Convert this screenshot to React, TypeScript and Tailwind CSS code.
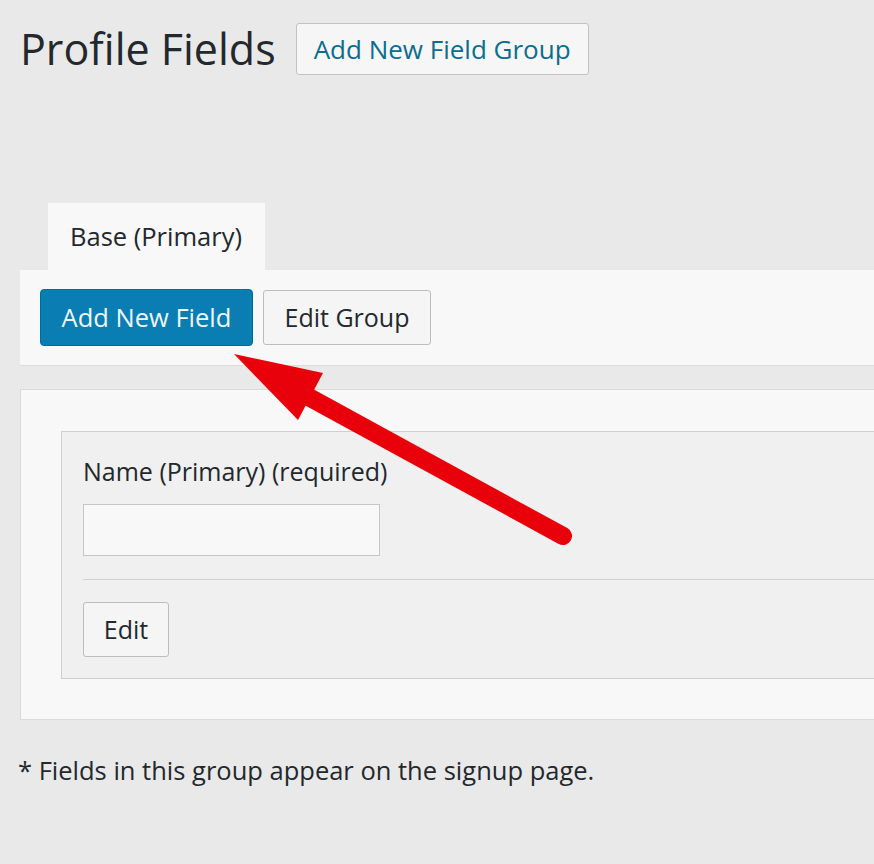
const font = "font-['Open_Sans','Noto_Sans',sans-serif]";

const Arrow = () => (
  <svg className="pointer-events-none absolute left-0 top-0" width="874" height="864" viewBox="0 0 874 864">
    <line x1="305" y1="395" x2="563" y2="536" stroke="#e8000b" strokeWidth="18" strokeLinecap="round" />
    <polygon points="234,354 323,373 298,420" fill="#e8000b" />
  </svg>
);

export default function App() {
  return (
    <div className={`relative min-h-[864px] overflow-hidden bg-[#e9e9e9] pl-5 pt-[23px] text-[#23282d] ${font}`}>
      <div className="flex items-center gap-5">
        <h1 className="text-[43px] leading-[52px]">Profile Fields</h1>
        <button className="h-[52px] rounded-[3px] border border-[#c2c2c2] bg-[#f6f6f6] px-[17px] text-[26px] text-[#0b6d8f]">
          Add New Field Group
        </button>
      </div>

      <div className="ml-7 mt-[128px] flex h-[67px] w-[217px] items-center bg-[#f8f8f8] pl-[22px] text-[25.5px]">
        Base (Primary)
      </div>
      <div className="flex h-24 items-center gap-[10px] border-b border-[#dcdcdc] bg-[#f8f8f8] pl-5">
        <button className="h-[57px] w-[213px] rounded-[4px] border border-[#006c9c] bg-[#0a7db3] text-[25.5px] text-[#eef6fa]">
          Add New Field
        </button>
        <button className="h-[55px] w-[168px] rounded-[3px] border border-[#bdbdbd] bg-[#f5f5f5] text-[25px]">
          Edit Group
        </button>
      </div>

      <div className="mt-[23px] h-[331px] border border-r-0 border-[#dadada] bg-[#f8f8f8] pl-10 pt-[41px]">
        <div className="h-[248px] border border-r-0 border-[#cfcfcf] bg-[#f0f0f0] pl-[21px] pt-[22px]">
          <div className="text-[25px] leading-[34px]">Name (Primary) (required)</div>
          <div className="mt-4 h-[52px] w-[297px] border border-[#c6c6c6] bg-[#f8f8f8]" />
          <div className="mt-[23px] border-t border-[#d2d2d2]" />
          <button className="mt-[22px] h-[55px] w-[86px] rounded-[3px] border border-[#bdbdbd] bg-[#f5f5f5] text-[25px]">
            Edit
          </button>
        </div>
      </div>

      <p className="-ml-[2px] mt-[31px] text-[25.5px]">* Fields in this group appear on the signup page.</p>

      <Arrow />
    </div>
  );
}
